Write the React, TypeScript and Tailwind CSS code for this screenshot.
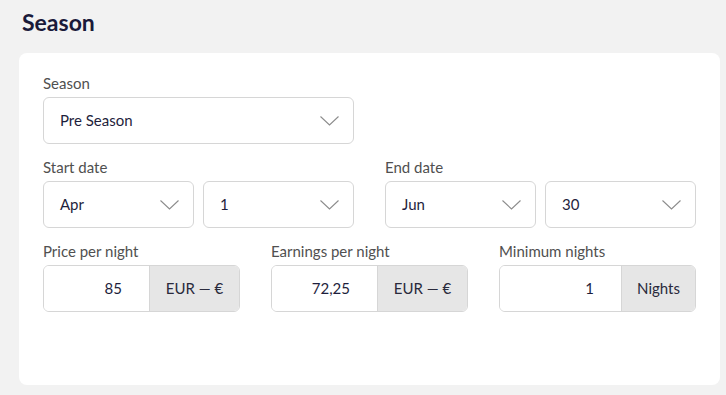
import React from 'react';

const font = { fontFamily: 'Lato, "Noto Sans", sans-serif' };

function Chevron() {
  return (
    <svg width="19" height="10" viewBox="0 0 19 10" fill="none" className="shrink-0">
      <polyline points="0.5,0.5 9.5,9 18.5,0.5" stroke="#8c8c8c" strokeWidth="1.1" />
    </svg>
  );
}

function Label({ children }: { children: React.ReactNode }) {
  return <div className="mb-1 text-[15px] leading-5 text-[#505050]">{children}</div>;
}

function Select({ value }: { value: string }) {
  return (
    <div className="flex h-[47px] w-full items-center justify-between rounded-[6px] border border-[#d6d6d6] bg-white pl-4 pr-[14px]">
      <span className="text-[15px] text-[#1e1e3c]">{value}</span>
      <Chevron />
    </div>
  );
}

function AddonInput({
  label,
  value,
  addon,
  addonWidth,
}: {
  label: string;
  value: string;
  addon: string;
  addonWidth: string;
}) {
  return (
    <div className="flex w-[197px] flex-col">
      <Label>{label}</Label>
      <div className="flex h-[47px] overflow-hidden rounded-[6px] border border-[#d6d6d6]">
        <div className="flex flex-1 items-center justify-end bg-white pr-[27px] text-[15px] text-[#1e1e3c]">
          {value}
        </div>
        <div
          className={`flex items-center justify-center border-l border-[#d6d6d6] bg-[#e6e6e6] text-[15px] text-[#2a2a3c] ${addonWidth}`}
        >
          {addon}
        </div>
      </div>
    </div>
  );
}

export default function App() {
  return (
    <div className="min-h-[395px] bg-[#f2f2f2] pl-[19px] pr-[6px] pt-[6px]" style={font}>
      <h1 className="ml-[3px] mb-[15px] text-[23px] font-bold leading-8 text-[#1a1a3a]">Season</h1>
      <div className="rounded-[8px] bg-white px-6 pt-5 pb-[73px]">
        <div className="flex flex-col gap-[13px]">
          <div className="flex w-[311px] flex-col">
            <Label>Season</Label>
            <Select value="Pre Season" />
          </div>

          <div className="flex gap-[31px]">
            <div className="flex w-[311px] flex-col">
              <Label>Start date</Label>
              <div className="grid grid-cols-2 gap-[9px]">
                <Select value="Apr" />
                <Select value="1" />
              </div>
            </div>
            <div className="flex w-[311px] flex-col">
              <Label>End date</Label>
              <div className="grid grid-cols-2 gap-[9px]">
                <Select value="Jun" />
                <Select value="30" />
              </div>
            </div>
          </div>

          <div className="flex gap-[31px]">
            <AddonInput label="Price per night" value="85" addon="EUR — €" addonWidth="w-[90px]" />
            <AddonInput label="Earnings per night" value="72,25" addon="EUR — €" addonWidth="w-[90px]" />
            <AddonInput label="Minimum nights" value="1" addon="Nights" addonWidth="w-[74px]" />
          </div>
        </div>
      </div>
    </div>
  );
}
